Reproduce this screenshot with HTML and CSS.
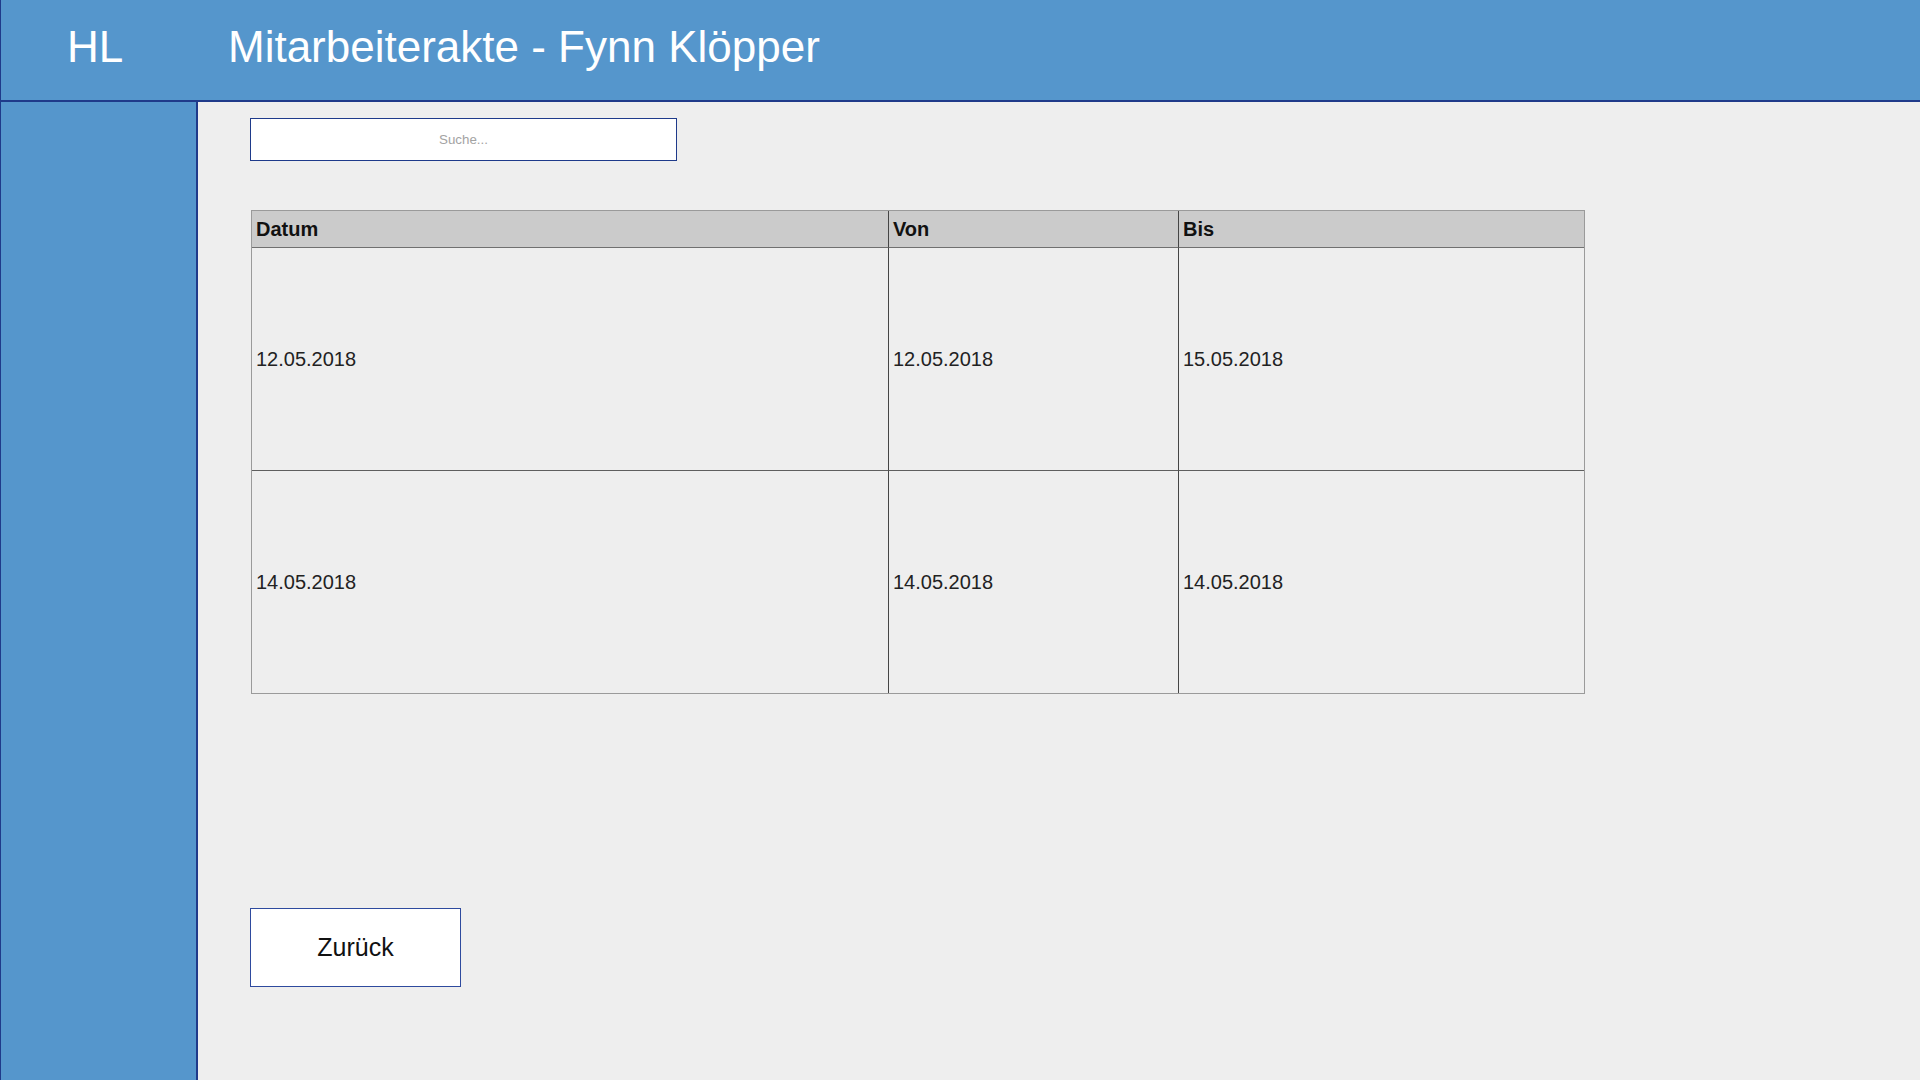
FILE: index.html
```html
<!DOCTYPE html>
<html lang="de">
<head>
<meta charset="utf-8">
<title>Mitarbeiterakte - Fynn Klöpper</title>
<link rel="stylesheet" href="styles.css">
</head>
<body>
<header class="topbar">
  <div class="logo">HL</div>
  <h1 class="title">Mitarbeiterakte - Fynn Klöpper</h1>
</header>
<div class="layout">
  <aside class="sidebar"></aside>
  <main class="content">
    <input class="search" type="text" placeholder="Suche...">
    <table class="records">
      <colgroup>
        <col class="c1"><col class="c2"><col class="c3">
      </colgroup>
      <thead>
        <tr><th>Datum</th><th>Von</th><th>Bis</th></tr>
      </thead>
      <tbody>
        <tr class="first"><td>12.05.2018</td><td>12.05.2018</td><td>15.05.2018</td></tr>
        <tr><td>14.05.2018</td><td>14.05.2018</td><td>14.05.2018</td></tr>
      </tbody>
    </table>
    <button class="back" type="button">Zurück</button>
  </main>
</div>
</body>
</html>
```
FILE: styles.css
```css
html, body {
  margin: 0;
  padding: 0;
  height: 100%;
}
body {
  background: #eeeeee;
  font-family: "Liberation Sans", Arial, sans-serif;
  display: flex;
  flex-direction: column;
  min-height: 1080px;
}
.topbar {
  box-sizing: border-box;
  height: 102px;
  flex: 0 0 auto;
  background: #5596cc;
  border-bottom: 2px solid #1f3a8a;
  border-left: 1px solid #1f3a8a;
  display: flex;
  align-items: flex-start;
  padding-top: 22px;
  color: #ffffff;
}
.logo {
  box-sizing: border-box;
  flex: 0 0 auto;
  width: 227px;
  padding-left: 66px;
  font-size: 44px;
  line-height: 50px;
}
.title {
  margin: 0;
  font-size: 44px;
  font-weight: normal;
  line-height: 50px;
}
.layout {
  flex: 1 1 auto;
  display: flex;
}
.sidebar {
  width: 198px;
  box-sizing: border-box;
  flex: 0 0 auto;
  background: #5596cc;
  border-right: 2px solid #1f3a8a;
  border-left: 1px solid #1f3a8a;
}
.content {
  flex: 1 1 auto;
  padding: 16px 0 0 52px;
  display: flex;
  flex-direction: column;
  align-items: flex-start;
}
.search {
  box-sizing: border-box;
  width: 427px;
  height: 43px;
  margin: 0;
  border: 1px solid #1e3a8a;
  background: #ffffff;
  text-align: center;
  font-family: "Liberation Sans", Arial, sans-serif;
  font-size: 13.33px;
  color: #333;
  outline: none;
}
.search::placeholder {
  color: #a3a3a3;
}
.records {
  margin: 49px 0 0 1px;
  box-sizing: border-box;
  width: 1334px;
  table-layout: fixed;
  border-collapse: separate;
  border-spacing: 0;
  border: 1px solid #9a9a9a;
  font-size: 20px;
}
.records .c1 { width: 636px; }
.records .c2 { width: 290px; }
.records .c3 { width: 406px; }
.records th {
  box-sizing: border-box;
  height: 37px;
  padding: 0 4px;
  background: #cbcbcb;
  color: #111111;
  text-align: left;
  font-weight: bold;
  border-bottom: 1px solid #707070;
}
.records td {
  box-sizing: border-box;
  height: 223px;
  padding: 0 4px;
  color: #222222;
  vertical-align: middle;
}
.records tr.first td {
  height: 222px;
}
.records th + th,
.records td + td {
  border-left: 1px solid #454545;
}
.records tbody tr + tr td {
  border-top: 1px solid #5e5e5e;
}
.back {
  margin: 214px 0 0 0;
  box-sizing: border-box;
  width: 211px;
  height: 79px;
  background: #ffffff;
  border: 1px solid #2e4a9e;
  font-family: "Liberation Sans", Arial, sans-serif;
  font-size: 25px;
  color: #111111;
  padding: 0;
  cursor: pointer;
}
```
